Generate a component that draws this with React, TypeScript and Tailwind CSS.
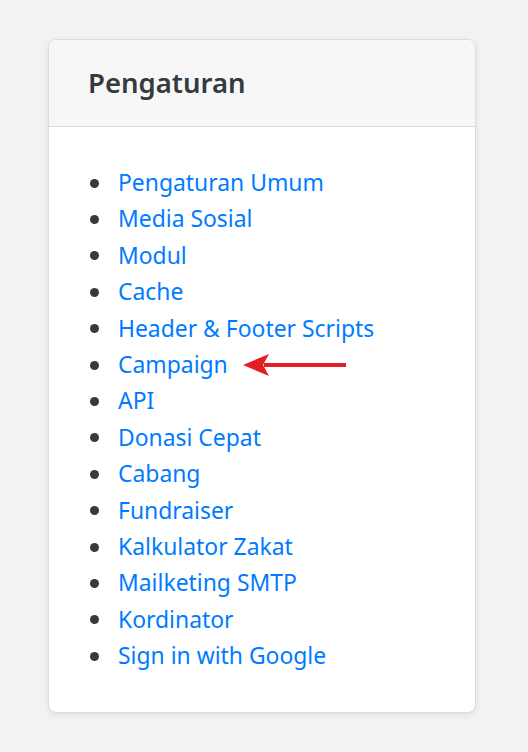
import React from "react";

const items = [
  "Pengaturan Umum",
  "Media Sosial",
  "Modul",
  "Cache",
  "Header & Footer Scripts",
  "Campaign",
  "API",
  "Donasi Cepat",
  "Cabang",
  "Fundraiser",
  "Kalkulator Zakat",
  "Mailketing SMTP",
  "Kordinator",
  "Sign in with Google",
];

const ArrowLeft = () => (
  <svg width="106" height="24" viewBox="0 0 106 24" className="inline-block align-middle ml-[14px]">
    <path d="M104 12 H22" stroke="#e31e24" strokeWidth="4" />
    <path d="M1 12 L27 1 L21 12 L27 23 Z" fill="#e31e24" />
  </svg>
);

export default function App() {
  return (
    <div className="min-h-[752px] bg-[#f2f2f2] pt-[39px] px-[48px] pb-[40px] font-['Noto_Sans',sans-serif]">
      <div className="w-[428px] bg-white border border-[#dcdcdc] rounded-[8px] shadow-[0_2px_6px_rgba(0,0,0,0.08)] overflow-hidden">
        {/* Header */}
        <div className="bg-[#f7f7f7] border-b border-[#dcdcdc] h-[87px] flex items-center px-[39px]">
          <h5 className="text-[27.5px] font-semibold text-[#343a40] leading-none">Pengaturan</h5>
        </div>

        {/* Body */}
        <div className="pt-[38px] pb-[38px] px-[39px]">
          <ul>
            {items.map((item) => (
              <li key={item} className="flex items-center h-[36.4px] text-[22.9px]">
                <span className="w-[9px] h-[9px] rounded-full bg-[#343a40] ml-[2px] mr-[19px] shrink-0" />
                <a href="#" className="text-[#007bff] whitespace-nowrap">
                  {item}
                </a>
                {item === "Campaign" && <ArrowLeft />}
              </li>
            ))}
          </ul>
        </div>
      </div>
    </div>
  );
}
